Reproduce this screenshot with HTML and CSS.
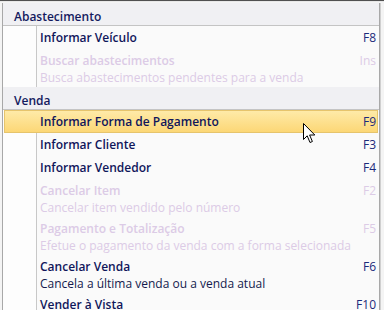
FILE: index.html
```html
<!DOCTYPE html>
<html lang="pt">
<head>
<meta charset="utf-8">
<link rel="stylesheet" href="styles.css">
</head>
<body>
<div class="screen">
  <div class="topstrip"></div>
  <div class="menu">
    <div class="group-title">Abastecimento</div>
    <ul class="items">
      <li class="item"><div class="row"><span class="title">Informar Veículo</span><span class="key">F8</span></div></li>
      <li class="item two disabled"><div class="row"><span class="title">Buscar abastecimentos</span><span class="key">Ins</span></div><div class="desc">Busca abastecimentos pendentes para a venda</div></li>
    </ul>
    <div class="group-title">Venda</div>
    <ul class="items">
      <li class="item hot"><div class="row"><span class="title">Informar Forma de Pagamento</span><span class="key">F9</span></div></li>
      <li class="item"><div class="row"><span class="title">Informar Cliente</span><span class="key">F3</span></div></li>
      <li class="item"><div class="row"><span class="title">Informar Vendedor</span><span class="key">F4</span></div></li>
      <li class="item two disabled"><div class="row"><span class="title">Cancelar Item</span><span class="key">F2</span></div><div class="desc">Cancelar item vendido pelo número</div></li>
      <li class="item two disabled"><div class="row"><span class="title">Pagamento e Totalização</span><span class="key">F5</span></div><div class="desc">Efetue o pagamento da venda com a forma selecionada</div></li>
      <li class="item two"><div class="row"><span class="title">Cancelar Venda</span><span class="key">F6</span></div><div class="desc">Cancela a última venda ou a venda atual</div></li>
      <li class="item"><div class="row"><span class="title">Vender à Vista</span><span class="key">F10</span></div></li>
    </ul>
  </div>
  <svg class="cursor" width="13" height="21" viewBox="0 0 13 21"><path d="M0.5 0.5 L0.5 16.5 L4.2 12.8 L7 19.5 L9.4 18.5 L6.6 12 L11.8 12 Z" fill="#fff" stroke="#000" stroke-width="1" stroke-linejoin="miter"/></svg>
</div>
</body>
</html>
```
FILE: styles.css
```css
html, body {
  margin: 0;
  padding: 0;
}
body {
  background: #f4f4f4;
  font-family: "Open Sans", "Noto Sans", sans-serif;
  font-size: 12px;
  overflow: hidden;
}
.screen {
  position: relative;
  width: 384px;
  height: 310px;
  overflow: hidden;
}
.topstrip {
  height: 1px;
  background: #505050;
  border-bottom: 1px solid #e8e8e8;
}
.menu {
  margin: 1px 0 0 2px;
  width: 378px;
  box-sizing: border-box;
  background: #f0f0f3;
  border-left: 1px solid #a8a8a8;
  border-right: 1px solid #a8a8a8;
  box-shadow: 1px 0 0 #d0d0d0;
}
.group-title {
  height: 23px;
  box-sizing: border-box;
  padding: 5px 0 0 11px;
  line-height: 17px;
  font-weight: 600;
  color: #141a5e;
  border-bottom: 1px solid #c4c4c4;
}
.items {
  list-style: none;
  margin: 0;
  padding: 0;
  background: linear-gradient(to right, #fdfdfd 33px, #c8c8c8 33px, #c8c8c8 34px, #fafafa 34px);
}
.item {
  margin: 0 1px;
  border: 1px solid transparent;
  padding: 3px 1px 2px 35px;
}
.item.two {
  padding-bottom: 0;
}
.row {
  display: flex;
  justify-content: space-between;
  line-height: 16px;
}
.title {
  font-weight: 600;
  color: #10165a;
}
.key {
  color: #1c2a7a;
}
.desc {
  line-height: 17px;
  color: #141a4e;
}
.disabled .title,
.disabled .key,
.disabled .desc {
  color: #dccbe6;
}
.item.hot {
  border-color: #e6c46c;
  background: linear-gradient(#feeaa8, #fcd776);
}
.cursor {
  position: absolute;
  left: 303px;
  top: 123px;
}
```
